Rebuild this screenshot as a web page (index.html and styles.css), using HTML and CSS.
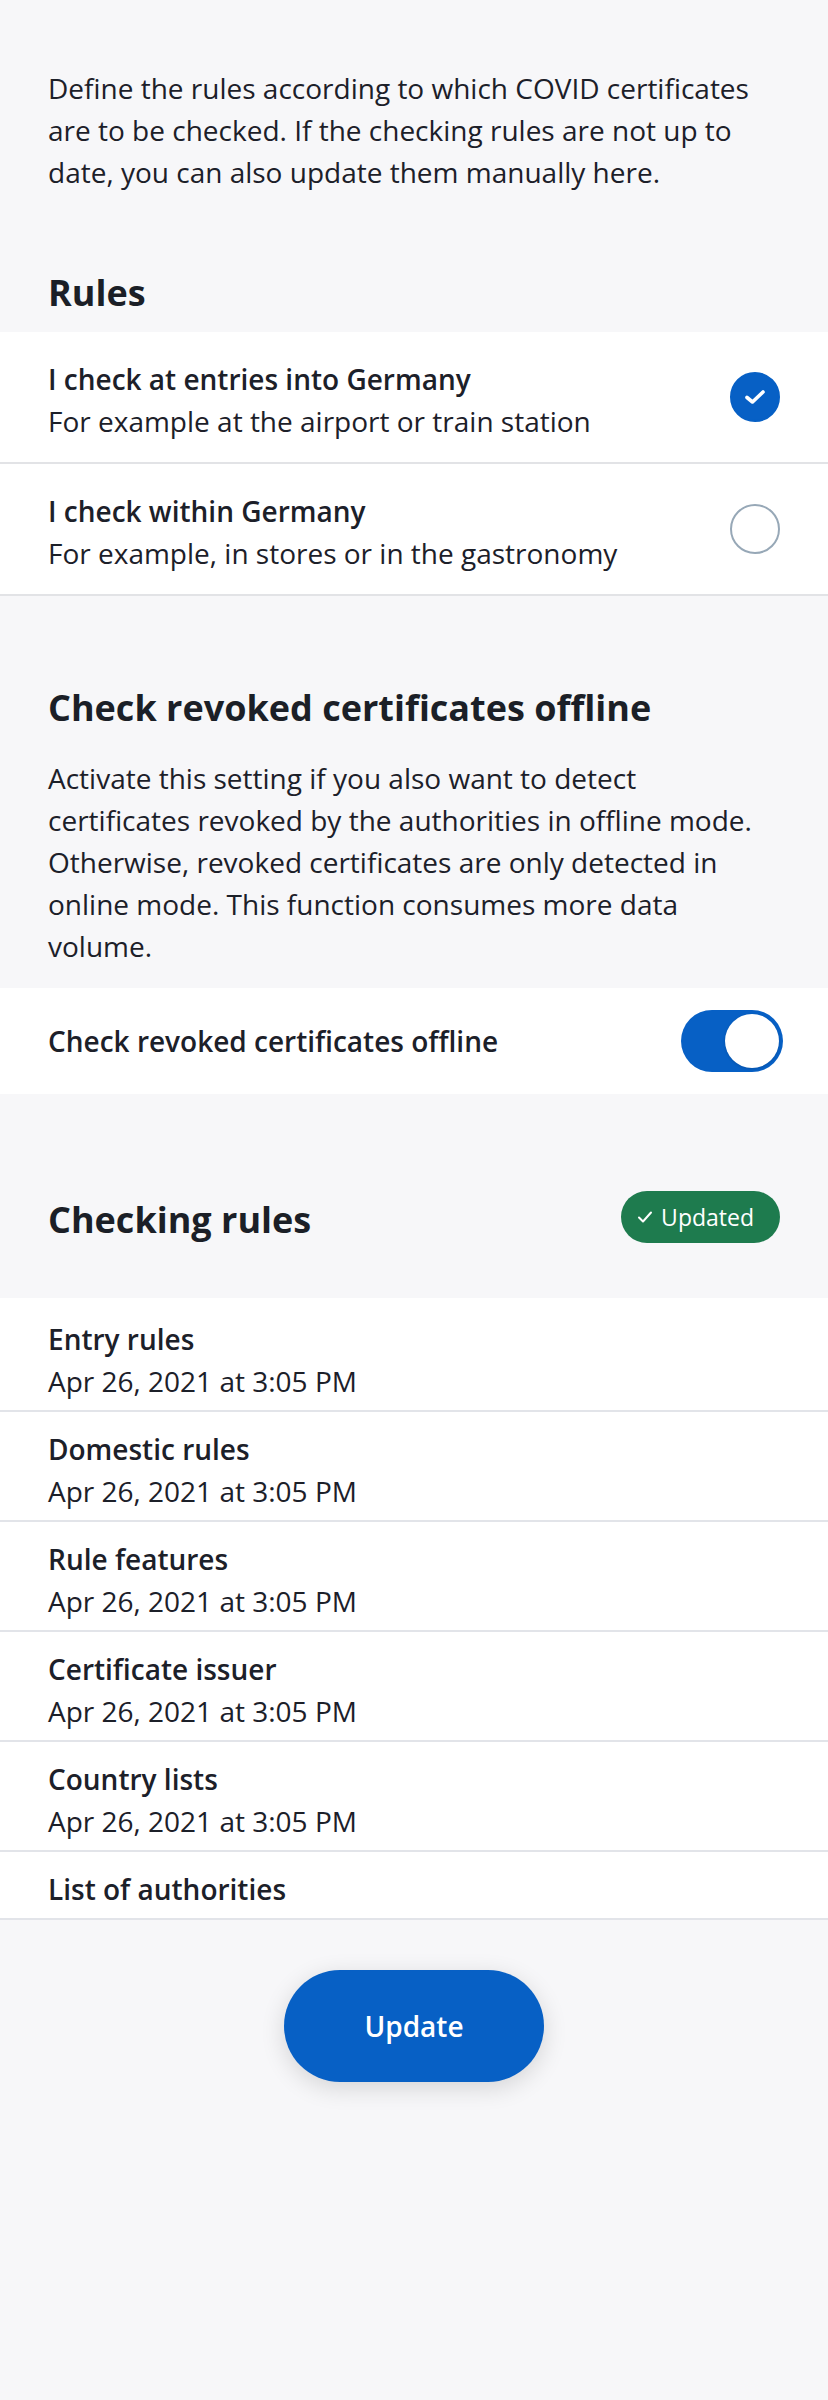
FILE: index.html
```html
<!DOCTYPE html>
<html lang="en">
<head>
<meta charset="utf-8">
<title>Checking rules</title>
<link rel="stylesheet" href="styles.css">
</head>
<body>
<main class="page">
  <p class="intro">Define the rules according to which COVID certificates are to be checked. If the checking rules are not up to date, you can also update them manually here.</p>

  <h2 class="section-title rules-title">Rules</h2>
  <ul class="option-list">
    <li class="option">
      <div class="option-text">
        <span class="option-title">I check at entries into Germany</span>
        <span class="option-sub">For example at the airport or train station</span>
      </div>
      <span class="radio radio--checked">
        <svg width="22" height="16" viewBox="0 0 22 16"><polyline points="3,8.5 8.5,13 19,3" fill="none" stroke="#fff" stroke-width="3.6" stroke-linecap="round" stroke-linejoin="round"/></svg>
      </span>
    </li>
    <li class="option">
      <div class="option-text">
        <span class="option-title">I check within Germany</span>
        <span class="option-sub">For example, in stores or in the gastronomy</span>
      </div>
      <span class="radio"></span>
    </li>
  </ul>

  <section class="offline">
    <h2 class="section-title">Check revoked certificates offline</h2>
    <p class="desc">Activate this setting if you also want to detect certificates revoked by the authorities in offline mode. Otherwise, revoked certificates are only detected in online mode. This function consumes more data volume.</p>
  </section>
  <div class="toggle-row">
    <span class="toggle-label">Check revoked certificates offline</span>
    <span class="switch"><span class="knob"></span></span>
  </div>

  <div class="rules-header">
    <h2 class="section-title">Checking rules</h2>
    <span class="badge">
      <svg width="16" height="14" viewBox="0 0 16 14"><polyline points="2,7.5 6,11.5 14,2.5" fill="none" stroke="#fff" stroke-width="2" stroke-linecap="round" stroke-linejoin="round"/></svg>
      <span>Updated</span>
    </span>
  </div>
  <ul class="rule-list">
    <li class="rule"><span class="rule-name">Entry rules</span><span class="rule-date">Apr 26, 2021 at 3:05 PM</span></li>
    <li class="rule"><span class="rule-name">Domestic rules</span><span class="rule-date">Apr 26, 2021 at 3:05 PM</span></li>
    <li class="rule"><span class="rule-name">Rule features</span><span class="rule-date">Apr 26, 2021 at 3:05 PM</span></li>
    <li class="rule"><span class="rule-name">Certificate issuer</span><span class="rule-date">Apr 26, 2021 at 3:05 PM</span></li>
    <li class="rule"><span class="rule-name">Country lists</span><span class="rule-date">Apr 26, 2021 at 3:05 PM</span></li>
    <li class="rule"><span class="rule-name">List of authorities</span></li>
  </ul>

  <div class="actions">
    <button class="btn" type="button">Update</button>
  </div>
</main>
</body>
</html>
```
FILE: styles.css
```css
* { box-sizing: border-box; }

html, body {
  margin: 0;
  padding: 0;
  background: #f7f7f9;
}

body {
  font-family: "Open Sans", "Noto Sans", "Liberation Sans", sans-serif;
  color: #1c2029;
  font-size: 28px;
  line-height: 42px;
  min-height: 2400px;
}

.page {
  display: flex;
  flex-direction: column;
}

.intro {
  margin: 0;
  padding: 67px 48px 0;
}

.section-title {
  margin: 0;
  font-size: 36px;
  line-height: 47px;
  font-weight: 700;
  color: #1b1f27;
}

.rules-title {
  padding: 0 48px;
  margin: 76px 0 16px;
}

.option-list, .rule-list {
  list-style: none;
  margin: 0;
  padding: 0;
  background: #fff;
}

.option {
  display: flex;
  align-items: center;
  justify-content: space-between;
  padding: 26px 48px 20px;
  border-bottom: 2px solid #e2e3e6;
}

.option-text {
  display: flex;
  flex-direction: column;
}

.option-title {
  font-weight: 600;
}

.radio {
  width: 50px;
  height: 50px;
  border-radius: 50%;
  border: 2px solid #97a8b7;
  display: flex;
  align-items: center;
  justify-content: center;
  flex: none;
  margin-top: -6px;
}

.radio--checked {
  background: #0760c5;
  border-color: #0760c5;
}

.offline {
  padding: 88px 48px 0;
}

.desc {
  margin: 26px 0 21px;
}

.toggle-row {
  display: flex;
  align-items: center;
  justify-content: space-between;
  height: 106px;
  padding: 0 45px 0 48px;
  background: #fff;
}

.toggle-label {
  font-weight: 600;
}

.switch {
  width: 102px;
  height: 62px;
  border-radius: 31px;
  background: #0760c5;
  display: flex;
  align-items: center;
  justify-content: flex-end;
  padding: 4px;
}

.knob {
  width: 54px;
  height: 54px;
  border-radius: 50%;
  background: #fff;
  box-shadow: 0 1px 3px rgba(0, 0, 0, 0.15);
}

.rules-header {
  display: flex;
  align-items: center;
  justify-content: space-between;
  padding: 0 48px;
  margin: 102px 0 55px;
}

.badge {
  display: flex;
  align-items: center;
  gap: 8px;
  height: 52px;
  padding: 0 26px 0 16px;
  border-radius: 26px;
  background: #1e7b4e;
  color: #fff;
  font-size: 23px;
  line-height: 30px;
  margin-top: -6px;
}

.rule-list {
  padding-top: 4px;
}

.rule {
  display: flex;
  flex-direction: column;
  padding: 16px 48px 8px;
  border-bottom: 2px solid #e2e4e9;
}

.rule-name {
  font-weight: 600;
}

.actions {
  display: flex;
  justify-content: center;
  padding-top: 50px;
}

.btn {
  width: 260px;
  height: 112px;
  border: none;
  border-radius: 56px;
  background: #0760c5;
  color: #fff;
  font-family: inherit;
  font-size: 28px;
  font-weight: 600;
  box-shadow: 0 6px 24px rgba(0, 0, 0, 0.14);
}
```
